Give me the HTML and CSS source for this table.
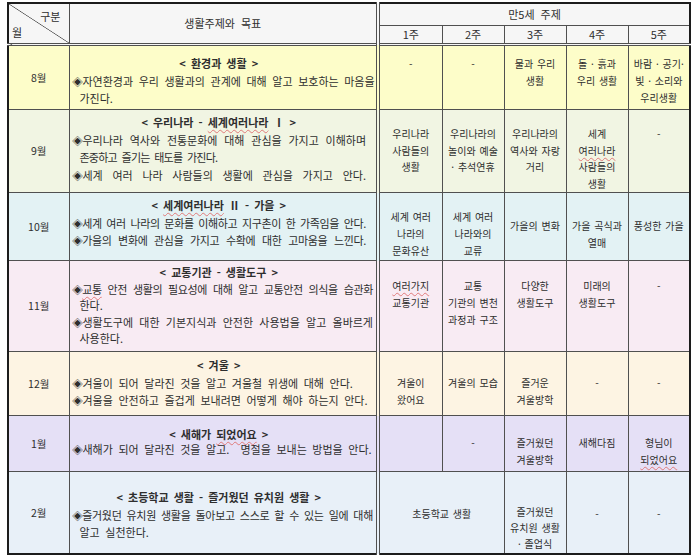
FILE: index.html
```html
<!DOCTYPE html>
<html lang="ko">
<head>
<meta charset="utf-8">
<title>만5세 생활주제</title>
<link rel="stylesheet" href="styles.css">
</head>
<body>
<div class="page">
<table class="plan">
  <colgroup>
    <col class="c-mon"><col class="c-goal"><col class="c-w1"><col class="c-w"><col class="c-w"><col class="c-w"><col class="c-w">
  </colgroup>
  <tr class="h1">
    <th rowspan="2" class="corner"><div class="corner-in"><span class="gu">구분</span><span class="wol">월</span></div></th>
    <th rowspan="2" class="goalh">생활주제와 목표</th>
    <th colspan="5" class="theme">만5세 주제</th>
  </tr>
  <tr class="h2">
    <th class="wkh first">1주</th><th class="wkh">2주</th><th class="wkh">3주</th><th class="wkh">4주</th><th class="wkh">5주</th>
  </tr>

  <tr class="r8">
    <td class="mon">8월</td>
    <td class="g">
      <div class="t">&lt; 환경과 생활 &gt;</div>
      <div class="b j jw">◈자연환경과 우리 생활과의 관계에 대해 알고 보호하는 마음을</div>
      <div class="c">가진다.</div>
    </td>
    <td class="w first">-</td><td class="w">-</td><td class="w">물과 우리<br>생활</td><td class="w">돌 · 흙과<br>우리 생활</td><td class="w">바람 · 공기·<br>빛 · 소리와<br>우리생활</td>
  </tr>

  <tr class="r9">
    <td class="mon">9월</td>
    <td class="g">
      <div class="t">&lt; 우리나라 - <span class="sp">세계여러나라</span> Ⅰ &gt;</div>
      <div class="b j">◈우리나라 역사와 전통문화에 대해 관심을 가지고 이해하며</div>
      <div class="c narrow">존중하고 즐기는 태도를 가진다.</div>
      <div class="b j">◈세계 여러 나라 사람들의 생활에 관심을 가지고 안다.</div>
    </td>
    <td class="w first">우리나라<br>사람들의<br>생활</td><td class="w">우리나라의<br>놀이와 예술<br>· 추석연휴</td><td class="w">우리나라의<br>역사와 자랑<br>거리</td><td class="w">세계<br><span class="sp">여러나라</span><br>사람들의<br>생활</td><td class="w">-</td>
  </tr>

  <tr class="r10">
    <td class="mon">10월</td>
    <td class="g">
      <div class="t">&lt; <span class="sp">세계여러나라</span> Ⅱ - 가을 &gt;</div>
      <div class="b j cond">◈세계 여러 나라의 문화를 이해하고 지구촌이 한 가족임을 안다.</div>
      <div class="b j cond">◈가을의 변화에 관심을 가지고 수확에 대한 고마움을 느낀다.</div>
    </td>
    <td class="w first">세계 여러<br>나라의<br>문화유산</td><td class="w">세계 여러<br>나라와의<br>교류</td><td class="w low">가을의 변화</td><td class="w low">가을 곡식과<br>열매</td><td class="w low">풍성한 가을</td>
  </tr>

  <tr class="r11">
    <td class="mon">11월</td>
    <td class="g">
      <div class="t">&lt; 교통기관 - 생활도구 &gt;</div>
      <div class="b j jw cond">◈<span class="sp">교통</span> 안전 생활의 필요성에 대해 알고 교통안전 의식을 습관화</div>
      <div class="c">한다.</div>
      <div class="b j jw">◈생활도구에 대한 기본지식과 안전한 사용법을 알고 올바르게</div>
      <div class="c">사용한다.</div>
    </td>
    <td class="w first"><span class="sp">여러가지</span><br>교통기관</td><td class="w">교통<br>기관의 변천<br>과정과 구조</td><td class="w">다양한<br>생활도구</td><td class="w">미래의<br>생활도구</td><td class="w">-</td>
  </tr>

  <tr class="r12">
    <td class="mon">12월</td>
    <td class="g">
      <div class="t">&lt; 겨울 &gt;</div>
      <div class="b">◈겨울이 되어 달라진 것을 알고 겨울철 위생에 대해 안다.</div>
      <div class="b">◈겨울을 안전하고 즐겁게 보내려면 어떻게 해야 하는지 안다.</div>
    </td>
    <td class="w first">겨울이<br>왔어요</td><td class="w">겨울의 모습</td><td class="w">즐거운<br>겨울방학</td><td class="w">-</td><td class="w">-</td>
  </tr>

  <tr class="r1">
    <td class="mon">1월</td>
    <td class="g">
      <div class="t">&lt; 새해가 <span class="sp">되었어요</span> &gt;</div>
      <div class="b">◈새해가 되어 달라진 것을 알고.&nbsp; 명절을 보내는 방법을 안다.</div>
    </td>
    <td class="w first"></td><td class="w">-</td><td class="w">즐거웠던<br>겨울방학</td><td class="w">새해다짐</td><td class="w">형님이<br><span class="sp">되었어요</span></td>
  </tr>

  <tr class="r2">
    <td class="mon">2월</td>
    <td class="g">
      <div class="t">&lt; 초등학교 생활 - 즐거웠던 유치원 생활 &gt;</div>
      <div class="b j jw tight">◈즐거웠던 유치원 생활을 돌아보고 스스로 할 수 있는 일에 대해</div>
      <div class="c">알고 실천한다.</div>
    </td>
    <td class="w first" colspan="2">초등학교 생활</td><td class="w three">즐거웠던<br>유치원 생활<br>· 졸업식</td><td class="w">-</td><td class="w">-</td>
  </tr>
</table>
</div>
</body>
</html>
```

FILE: styles.css
```css
* { box-sizing: border-box; }
html, body { margin: 0; background: #ffffff; }
body {
  font-family: "Noto Sans CJK KR", "Noto Sans", sans-serif;
  font-size: 10px;
  color: #2e2e2e;
}
.page { padding: 2px 0 0 7px; }

.plan {
  border-collapse: collapse;
  table-layout: fixed;
  width: 684px;
  border: 2px solid #1c1c1c;
}
.plan th, .plan td {
  border: 1px solid #505050;
  padding: 0;
  font-weight: normal;
  line-height: 17.5px;
}
.c-mon { width: 61px; }
.c-goal { width: 309px; }
.c-w1 { width: 64px; }
.c-w { width: 62px; }

/* header */
.h1 { height: 22px; }
.h2 { height: 17px; }
.plan th {
  background: #f6f6f6;
  font-size: 11px;
  word-spacing: 3px;
  text-align: center;
  vertical-align: middle;
}
.corner {
  background: linear-gradient(to top right, transparent calc(50% - 0.7px), #555 50%, transparent calc(50% + 0.7px)), #f6f6f6 !important;
  border-bottom: 3px double #505050 !important;
}
.corner-in {
  height: 37px;
  display: flex;
  flex-direction: column;
  justify-content: space-between;
  padding: 4px 8px 3px 3px;
  line-height: 14px;
}
.gu { align-self: flex-end; }
.wol { align-self: flex-start; }
.goalh {
  border-right: 4px double #505050 !important;
  border-bottom: 3px double #505050 !important;
}
.wkh { border-bottom: 3px double #505050 !important; }
.first { border-left: 4px double #505050 !important; }

/* body cells */
.mon {
  text-align: center;
  vertical-align: middle;
  font-weight: bold;
  font-size: 10.5px;
}
.g {
  vertical-align: top;
  padding: 0 10px 0 2px !important;
  font-size: 11px;
  word-spacing: 2.5px;
  border-right: 4px double #505050 !important;
}
.g div { white-space: nowrap; }
.t { text-align: center; font-weight: bold; word-spacing: 2px; }
.c { padding-left: 8px; }
.narrow { letter-spacing: -0.8px; }
.j { text-align: justify; text-align-last: justify; }
.jw { margin-right: -7px; }
.cond { letter-spacing: -0.35px; word-spacing: 1px; }
.tight { letter-spacing: -0.3px; word-spacing: 0; }
.w {
  vertical-align: top;
  text-align: center;
  word-spacing: 1px;
  line-height: 17px !important;
}
.sp {
  text-decoration: underline wavy #e07a7a;
  text-decoration-thickness: 1px;
  text-underline-offset: 2px;
}

/* rows */
.r8 { height: 65px; }
.r8 td { background: #fdfdc9; }
.r8 .g { padding-top: 9px !important; }
.r8 .w { padding-top: 9px; }

.r9 { height: 83px; }
.r9 td { background: #f1f5e3; }
.r9 .g { padding-top: 4px !important; }
.r9 .w { padding-top: 16px; line-height: 16.5px !important; }

.r10 { height: 68px; }
.r10 td { background: #e3f2f4; }
.r10 .g { padding-top: 4px !important; }
.r10 .w { padding-top: 15px; }
.r10 .w.low { padding-top: 24px; }

.r11 { height: 91px; }
.r11 td { background: #f8ebf3; }
.r11 .g { padding-top: 3px !important; line-height: 16.5px; }
.r11 .w { padding-top: 16px; }

.r12 { height: 64px; }
.r12 td { background: #fdf4e3; }
.r12 .g { padding-top: 5px !important; }
.r12 .w { padding-top: 22px; }

.r1 { height: 56px; }
.r1 td { background: #e5e0f6; }
.r1 .g { padding-top: 12px !important; }
.r1 .g .t { line-height: 13px; }
.r1 .w { padding-top: 18px; }

.r2 { height: 82px; }
.r2 td { background: #e8f0f8; }
.r2 .g { padding-top: 17px !important; }
.r2 .w { padding-top: 33px; }
.r2 .w.three { line-height: 16px !important; padding-top: 32px; }
```
